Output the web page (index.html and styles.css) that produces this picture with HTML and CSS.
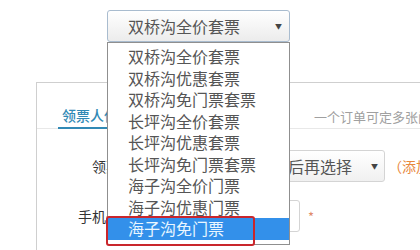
FILE: index.html
```html
<!DOCTYPE html>
<html lang="zh">
<head>
<meta charset="utf-8">
<link rel="stylesheet" href="styles.css">
</head>
<body>
<div class="picker">
  <div class="select-top">
    <span class="select-text">双桥沟全价套票</span>
    <span class="arrow">▼</span>
  </div>
  <ul class="dropdown">
    <li>双桥沟全价套票</li>
    <li>双桥沟优惠套票</li>
    <li>双桥沟免门票套票</li>
    <li>长坪沟全价套票</li>
    <li>长坪沟优惠套票</li>
    <li>长坪沟免门票套票</li>
    <li>海子沟全价门票</li>
    <li>海子沟优惠门票</li>
    <li class="active">海子沟免门票</li>
  </ul>
</div>
<div class="panel">
  <div class="tabs">
    <span class="tab current">领票人信息</span>
    <span class="tab other">联系人信息</span>
    <span class="note">一个订单可定多张门票</span>
  </div>
  <div class="row row-first">
    <span class="label">领票人：</span>
    <div class="field-select">
      <span class="field-text">请先添加领票人后再选择</span>
      <span class="arrow">▼</span>
    </div>
    <span class="hint">（添加领票人）</span>
  </div>
  <div class="row row-second">
    <span class="label">手机号码：</span>
    <div class="field-input"></div>
    <span class="star">*</span>
  </div>
</div>
</body>
</html>
```
FILE: styles.css
```css
* { box-sizing: border-box; }
html, body { margin: 0; padding: 0; }
body {
  width: 420px;
  height: 250px;
  overflow: hidden;
  background: #fff;
  font-family: "Noto Sans CJK SC", "Noto Sans", sans-serif;
  color: #444;
  padding-top: 10px;
}
.picker {
  position: relative;
  margin-left: 107px;
  width: 183px;
  z-index: 5;
}
.select-top {
  height: 32px;
  border: 1px solid #a9bccf;
  border-radius: 3px;
  background: linear-gradient(#ffffff, #ececec);
  display: flex;
  align-items: center;
  justify-content: space-between;
  padding: 0 7px 0 20px;
}
.select-text {
  font-size: 16px;
  line-height: 20px;
  color: #555;
}
.arrow {
  font-size: 7px;
  color: #444;
  flex-shrink: 0;
}
.dropdown {
  position: absolute;
  top: 32px;
  left: 0;
  width: 183px;
  margin: 0;
  padding: 3px 0 4px;
  list-style: none;
  background: #fff;
  border: 1px solid #8f8f8f;
}
.dropdown li {
  position: relative;
  height: 21.5px;
  line-height: 21.5px;
  font-size: 16px;
  padding-left: 20px;
  color: #555;
  white-space: nowrap;
}
.dropdown li.active {
  background: #3390ea;
  color: #eaf6ff;
}
.dropdown li.active::after {
  content: "";
  position: absolute;
  left: -2px;
  top: -2px;
  width: 145px;
  height: 26px;
  border: 2px solid #c9262c;
  border-radius: 3px;
}
.panel {
  margin-top: 40px;
  margin-left: 36px;
  width: 384px;
  height: 168px;
  overflow: hidden;
  border-top: 1px solid #cfcfcf;
  border-left: 1px solid #cfcfcf;
}
.tabs {
  display: flex;
  align-items: flex-end;
  height: 46px;
  border-bottom: 1px solid #e8e8e8;
  white-space: nowrap;
}
.tab, .note { flex-shrink: 0; }
.tab {
  font-size: 14px;
  line-height: 18px;
  padding: 0 4px 3px;
}
.tab.current {
  margin-left: 21px;
  color: #3189b5;
  font-weight: 500;
  border-bottom: 2px solid #3189b5;
  margin-bottom: -1px;
}
.tab.other {
  margin-left: 78px;
  color: #999;
}
.note {
  margin-left: 22px;
  font-size: 13px;
  line-height: 18px;
  padding-bottom: 2px;
  color: #a0a0a0;
}
.row {
  display: flex;
  align-items: center;
  height: 32px;
  white-space: nowrap;
}
.row > * { flex-shrink: 0; }
.row-first { margin-top: 21px; }
.row-second { margin-top: 18px; }
.label {
  width: 111px;
  text-align: right;
  font-size: 14px;
  color: #333;
}
.field-select {
  margin-left: 7px;
  width: 230px;
  height: 32px;
  border: 1px solid #d4d4d4;
  border-radius: 3px;
  background: linear-gradient(#ffffff, #f0f0f0);
  display: flex;
  align-items: center;
  justify-content: space-between;
  padding: 0 6px 0 20px;
}
.field-text {
  font-size: 16px;
  color: #555;
}
.hint {
  margin-left: 3px;
  font-size: 14px;
  color: #e8873c;
}
.field-input {
  margin-left: 7px;
  width: 145px;
  height: 32px;
  border: 1px solid #d4d4d4;
  border-radius: 3px;
  background: #fff;
}
.star {
  margin-left: 8px;
  font-size: 13px;
  color: #e08a6a;
}
```
